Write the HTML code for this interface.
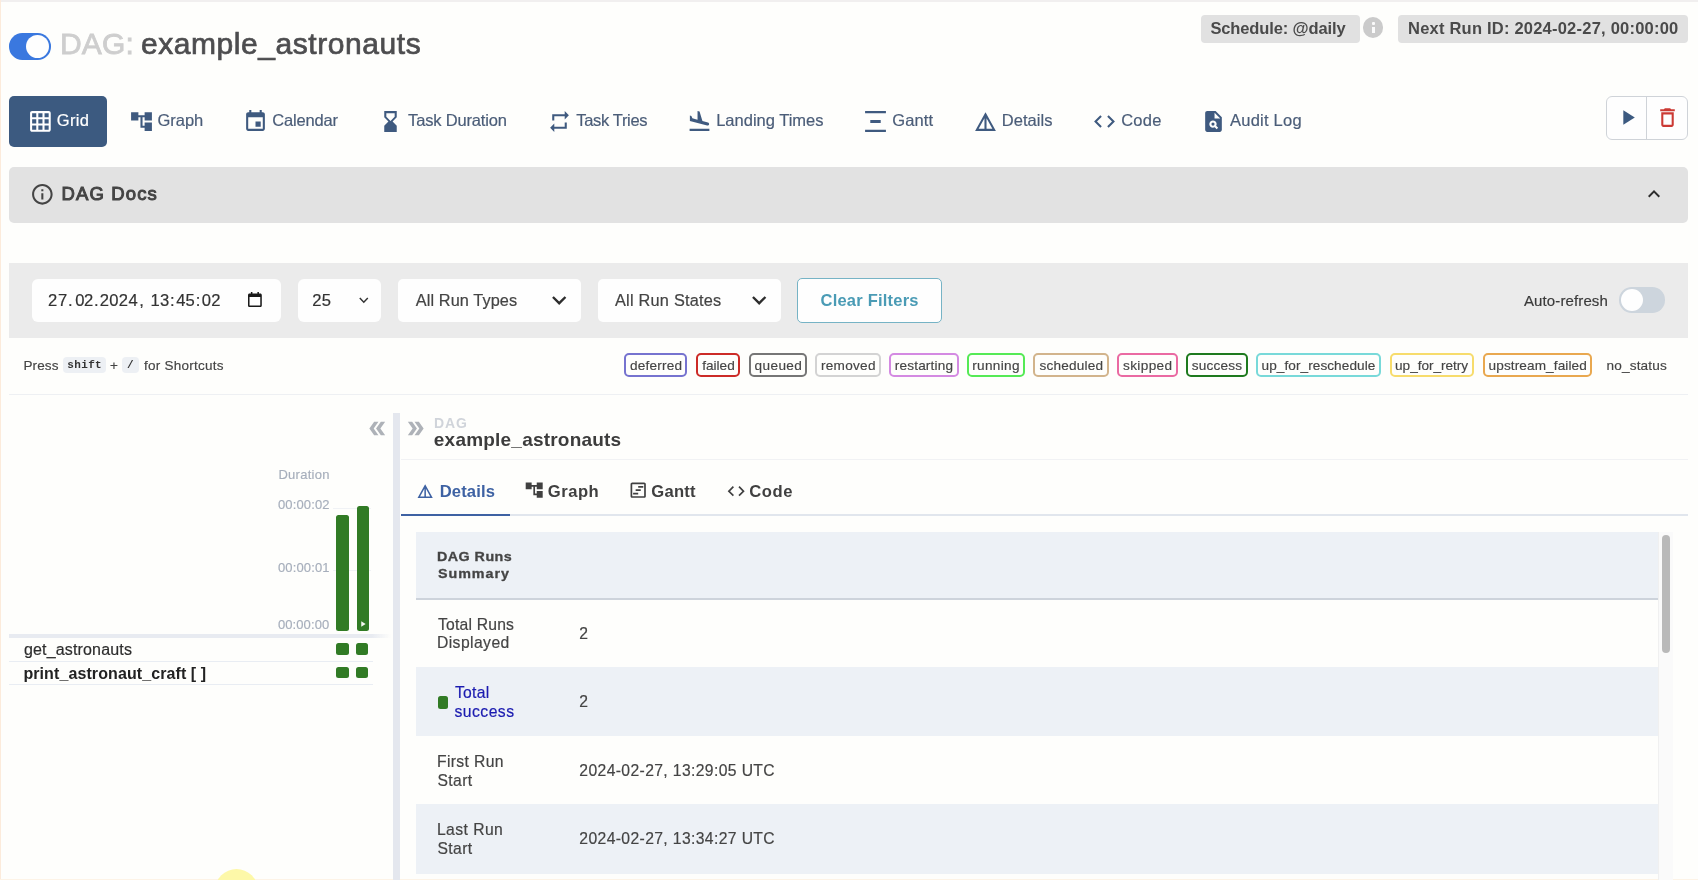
<!DOCTYPE html>
<html><head><meta charset="utf-8"><title>example_astronauts - Grid - Airflow</title>
<style>
html,body{margin:0;padding:0;}
body{width:1698px;height:880px;overflow:hidden;background:#fefefc;font-family:'Liberation Sans', sans-serif;position:relative;}
.t{position:absolute;white-space:pre;line-height:1;font-family:'Liberation Sans', sans-serif;}
#w{position:absolute;left:0;top:0;width:1698px;height:880px;will-change:transform;}
.a{position:absolute;}
svg{position:absolute;overflow:visible;}
</style></head><body><div id="w">
<!-- edges -->
<div class="a" style="left:0;top:0;width:1698px;height:2px;background:#f1efef"></div>
<div class="a" style="left:0;top:0;width:1.2px;height:880px;background:#fcebdb"></div>
<div class="a" style="left:0;top:878.5px;width:1698px;height:1.5px;background:#fdf3e6"></div>
<!-- cursor highlight -->
<div class="a" style="left:214.5px;top:869.2px;width:43.6px;height:43.6px;border-radius:50%;background:#fdf8a8"></div>

<!-- DAG toggle -->
<div class="a" style="left:9px;top:33px;width:42px;height:26.5px;border-radius:13.25px;background:#3a78df"></div>
<div class="a" style="left:26px;top:34.7px;width:23.2px;height:23.2px;border-radius:50%;background:#fefefe"></div>

<!-- schedule badges -->
<div class="a" style="left:1200.7px;top:14.6px;width:159.3px;height:28.1px;border-radius:4px;background:#e1e1e1"></div>
<div class="a" style="left:1398px;top:14.6px;width:290px;height:28.1px;border-radius:4px;background:#e1e1e1"></div>
<div class="a" style="left:1362.8px;top:17.2px;width:20.6px;height:20.6px;border-radius:50%;background:#cbcbcb"></div>
<div class="a" style="left:1371.7px;top:22px;width:3px;height:3px;background:#fbfbfb;border-radius:1px"></div>
<div class="a" style="left:1371.7px;top:26.6px;width:3px;height:6.8px;background:#fbfbfb"></div>

<!-- Grid tab -->
<div class="a" style="left:9px;top:96px;width:98px;height:50.7px;border-radius:5px;background:#3c5a80"></div>

<!-- run/delete buttons -->
<div class="a" style="left:1606px;top:96px;width:79.5px;height:41.6px;border:1px solid #cfd3d8;border-radius:6px;background:#fefefe"></div>
<div class="a" style="left:1646px;top:96px;width:1px;height:43.6px;background:#cfd3d8"></div>

<!-- DAG docs bar -->
<div class="a" style="left:9px;top:167px;width:1678.5px;height:55.5px;border-radius:5px;background:#e2e2e2"></div>

<!-- filter bar -->
<div class="a" style="left:9px;top:263px;width:1678.8px;height:74.5px;background:#ebebeb"></div>
<div class="a" style="left:32.4px;top:278.8px;width:248.2px;height:43.2px;border-radius:6px;background:#fefefe"></div>
<div class="a" style="left:298px;top:278.8px;width:83px;height:43.2px;border-radius:6px;background:#fefefe"></div>
<div class="a" style="left:397.8px;top:278.8px;width:183.7px;height:43.2px;border-radius:5px;background:#fefefe"></div>
<div class="a" style="left:597.9px;top:278.8px;width:183.4px;height:43.2px;border-radius:5px;background:#fefefe"></div>
<div class="a" style="left:797.3px;top:278px;width:142.5px;height:42.5px;border:1px solid #76b3c5;border-radius:5px;background:#fefefe"></div>
<!-- auto refresh switch -->
<div class="a" style="left:1619px;top:287.2px;width:46.4px;height:25.4px;border-radius:12.7px;background:#cdd5dd"></div>
<div class="a" style="left:1620.6px;top:288.8px;width:22.2px;height:22.2px;border-radius:50%;background:#fefefe"></div>

<!-- kbd -->
<div class="a" style="left:63px;top:357px;width:43px;height:16.4px;border-radius:4px;background:#edf0f4"></div>
<div class="a" style="left:122.3px;top:357px;width:16.7px;height:16.4px;border-radius:4px;background:#edf0f4"></div>
<!-- separator -->
<div class="a" style="left:9px;top:393.5px;width:1679px;height:1.5px;background:#eef0f3"></div>
<!-- legend -->
<div class="a" style="left:624.3px;top:353.3px;width:59.2px;height:20.2px;border:2px solid #7673cf;border-radius:5px"></div>
<div class="a" style="left:695.9px;top:353.3px;width:40.4px;height:20.2px;border:2px solid #cc2b27;border-radius:5px"></div>
<div class="a" style="left:748.7px;top:353.3px;width:54.6px;height:20.2px;border:2px solid #767676;border-radius:5px"></div>
<div class="a" style="left:815.4px;top:353.3px;width:61.5px;height:20.2px;border:2px solid #d3d3d3;border-radius:5px"></div>
<div class="a" style="left:889.3px;top:353.3px;width:65.3px;height:20.2px;border:2px solid #d48ae2;border-radius:5px"></div>
<div class="a" style="left:966.7px;top:353.3px;width:54.3px;height:20.2px;border:2px solid #55ea55;border-radius:5px"></div>
<div class="a" style="left:1033.4px;top:353.3px;width:71.2px;height:20.2px;border:2px solid #d2b48c;border-radius:5px"></div>
<div class="a" style="left:1117px;top:353.3px;width:56.5px;height:20.2px;border:2px solid #ea6aa2;border-radius:5px"></div>
<div class="a" style="left:1185.6px;top:353.3px;width:58.3px;height:20.2px;border:2px solid #1e7a1e;border-radius:5px"></div>
<div class="a" style="left:1256px;top:353.3px;width:121.0px;height:20.2px;border:2px solid #78d9d9;border-radius:5px"></div>
<div class="a" style="left:1389.5px;top:353.3px;width:80.9px;height:20.2px;border:2px solid #f7dc6c;border-radius:5px"></div>
<div class="a" style="left:1483px;top:353.3px;width:105.4px;height:20.2px;border:2px solid #e9a84f;border-radius:5px"></div>
<!-- grid panel -->
<div class="a" style="left:393.2px;top:413.2px;width:7.3px;height:467px;background:#e4e7ee"></div>
<div class="a" style="left:9px;top:634.3px;width:382px;height:3.4px;background:linear-gradient(to right,#e8ebf1 0,#e8ebf1 95%,rgba(232,235,241,0) 100%)"></div>
<div class="a" style="left:332.5px;top:507.8px;width:38px;height:1px;background:#f0f2f5"></div>
<div class="a" style="left:332.5px;top:569.9px;width:38px;height:1px;background:#f0f2f5"></div>
<div class="a" style="left:9px;top:660.7px;width:364px;height:1.2px;background:#e9edf3"></div>
<div class="a" style="left:9px;top:683.6px;width:364px;height:1.2px;background:#e9edf3"></div>
<!-- bars -->
<div class="a" style="left:336.4px;top:514.9px;width:12.6px;height:116px;border-radius:2.5px;background:#317b25"></div>
<div class="a" style="left:356.5px;top:505.7px;width:12.7px;height:125.2px;border-radius:2.5px;background:#317b25"></div>
<svg style="left:361px;top:620.8px" width="5" height="5.8" viewBox="0 0 6 7"><path d="M0.3 0.2 L5.6 3.5 L0.3 6.8 Z" fill="#f4f8f2"/></svg>
<!-- squares -->
<div class="a" style="left:336.4px;top:643.4px;width:12.2px;height:11.7px;border-radius:2.5px;background:#317b25"></div>
<div class="a" style="left:356.3px;top:643.4px;width:12.2px;height:11.7px;border-radius:2.5px;background:#317b25"></div>
<div class="a" style="left:336.4px;top:666.8px;width:12.2px;height:11.7px;border-radius:2.5px;background:#317b25"></div>
<div class="a" style="left:356.3px;top:666.8px;width:12.2px;height:11.7px;border-radius:2.5px;background:#317b25"></div>

<!-- right panel -->
<div class="a" style="left:400.5px;top:458.6px;width:1287.5px;height:1.2px;background:#f1f2f4"></div>
<div class="a" style="left:400.5px;top:514.3px;width:1287.5px;height:2px;background:#e1e6ed"></div>
<div class="a" style="left:400.5px;top:513.8px;width:109px;height:2.6px;background:#3e62a3"></div>
<!-- table -->
<div class="a" style="left:415.7px;top:531.6px;width:1242.3px;height:66.4px;background:#edf1f6"></div>
<div class="a" style="left:415.7px;top:597.8px;width:1242.3px;height:2.6px;background:#cdd3db"></div>
<div class="a" style="left:415.7px;top:667.2px;width:1242.3px;height:69.3px;background:#edf1f6"></div>
<div class="a" style="left:415.7px;top:804.4px;width:1242.3px;height:69.5px;background:#edf1f6"></div>
<div class="a" style="left:438px;top:696.3px;width:10px;height:12.3px;border-radius:2.5px;background:#317b25"></div>
<!-- scrollbar -->
<div class="a" style="left:1658px;top:532px;width:14.5px;height:348px;background:#fafafa;border-left:1px solid #f0f0f0;box-sizing:border-box"></div>
<div class="a" style="left:1661.6px;top:534.7px;width:8.4px;height:118.5px;border-radius:4.2px;background:#b9b9b9"></div>
<!-- icons -->
<svg style="left:27.9px;top:108.6px" width="24.8" height="24.8" viewBox="0 0 24 24"><path d="M20 2H4c-1.1 0-2 .9-2 2v16c0 1.1.9 2 2 2h16c1.1 0 2-.9 2-2V4c0-1.1-.9-2-2-2zM8 20H4v-4h4v4zm0-6H4v-4h4v4zm0-6H4V4h4v4zm6 12h-4v-4h4v4zm0-6h-4v-4h4v4zm0-6h-4V4h4v4zm6 12h-4v-4h4v4zm0-6h-4v-4h4v4zm0-6h-4V4h4v4z" fill="#ffffff" /></svg>
<svg style="left:128.50px;top:108.70px" width="25" height="25" viewBox="0 0 24 24"><path d="M22 11V3h-7v3H9V3H2v8h7V8h2v10h4v3h7v-8h-7v3h-2V8h2v3z" fill="#3f5a7f" /></svg>
<svg style="left:242.50px;top:108.70px" width="25" height="25" viewBox="0 0 24 24"><path d="M17 12h-5v5h5v-5zM16 1v2H8V1H6v2H5c-1.11 0-1.99.9-1.99 2L3 19c0 1.1.89 2 2 2h14c1.1 0 2-.9 2-2V5c0-1.1-.9-2-2-2h-1V1h-2zm3 18H5V8h14v11z" fill="#3f5a7f" /></svg>
<svg style="left:378.35px;top:108.70px" width="25" height="25" viewBox="0 0 24 24"><path d="M18 22l-.01-6L14 12l3.99-4.01L18 2H6v6l4 4-4 3.99V22h12zM8 7.5V4h8v3.5l-4 4-4-4z" fill="#3f5a7f" /></svg>
<svg style="left:546.75px;top:109.00px" width="25" height="25" viewBox="0 0 24 24"><path d="M7 7h10v3l4-4-4-4v3H5v6h2V7zm10 10H7v-3l-4 4 4 4v-3h12v-6h-2v4z" fill="#3f5a7f" /></svg>
<svg style="left:687.35px;top:108.70px" width="25" height="25" viewBox="0 0 24 24"><path d="M2.5 19h19v2h-19v-2zm16.84-3.15c.8.21 1.62-.26 1.84-1.06.21-.8-.26-1.62-1.06-1.84l-5.31-1.42-2.76-9.02L10.12 2v8.28L5.15 8.95l-.93-2.32-1.45-.39v5.17l16.57 4.44z" fill="#3f5a7f" /></svg>
<svg style="left:863.15px;top:108.70px" width="25" height="25" viewBox="0 0 24 24"><path d="M22 2v2H2V2h20zM7 10.5v3h10v-3H7zM2 20v2h20v-2H2z" fill="#3f5a7f" /></svg>
<svg style="left:972.95px;top:108.70px" width="25" height="25" viewBox="0 0 24 24"><path d="M12 3L2 21h20L12 3zm1 5.92L18.6 19H13V8.92zm-2 0V19H5.4L11 8.92z" fill="#3f5a7f" /></svg>
<svg style="left:1092.00px;top:108.50px" width="25" height="25" viewBox="0 0 24 24"><path d="M9.4 16.6L4.8 12l4.6-4.6L8 6l-6 6 6 6 1.4-1.4zm5.2 0l4.6-4.6-4.6-4.6L16 6l6 6-6 6-1.4-1.4z" fill="#3f5a7f" /></svg>
<svg style="left:1201.10px;top:108.90px" width="25" height="25" viewBox="0 0 24 24"><path d="M14 2H6c-1.1 0-2 .9-2 2v16c0 1.1.89 2 1.99 2H18c1.1 0 2-.9 2-2V8l-6-6zm1.04 17.45l-1.88-1.88c-1.33.71-3.01.53-4.13-.59-1.37-1.37-1.37-3.58 0-4.95 1.37-1.37 3.58-1.37 4.95 0 1.12 1.12 1.31 2.8.59 4.13l1.88 1.88-1.41 1.41zM13 9V3.5L18.5 9H13z M11.5 13a1.5 1.5 0 1 0 0 3 1.5 1.5 0 1 0 0-3z" fill="#3f5a7f" /></svg>
<svg style="left:1614.6px;top:105.3px" width="25" height="25" viewBox="0 0 24 24"><path d="M8 5v14l11-7z" fill="#3c5a80" /></svg>
<svg style="left:1654.7px;top:104.9px" width="25" height="25" viewBox="0 0 24 24"><path d="M6 19c0 1.1.9 2 2 2h8c1.1 0 2-.9 2-2V7H6v12zM8 9h8v10H8V9zm7.5-5l-1-1h-5l-1 1H5v2h14V4h-3.5z" fill="#cb3a34" /></svg>
<svg style="left:30.3px;top:181.5px" width="24.7" height="24.7" viewBox="0 0 24 24"><path d="M11 7h2v2h-2zm0 4h2v6h-2zm1-9C6.48 2 2 6.48 2 12s4.48 10 10 10 10-4.48 10-10S17.52 2 12 2zm0 18c-4.41 0-8-3.59-8-8s3.59-8 8-8 8 3.59 8 8-3.59 8-8 8z" fill="#444444" /></svg>
<svg style="left:1642px;top:181.5px" width="24" height="24" viewBox="0 0 24 24"><path d="M7.41 15.41L12 10.83l4.59 4.58L18 14l-6-6-6 6z" fill="#2d2d2d" /></svg>
<svg style="left:544.7px;top:285.8px" width="28.4" height="28.4" viewBox="0 0 24 24"><path d="M16.59 8.59L12 13.17 7.41 8.59 6 10l6 6 6-6z" fill="#2d2d2d" /></svg>
<svg style="left:745.2px;top:285.8px" width="28.4" height="28.4" viewBox="0 0 24 24"><path d="M16.59 8.59L12 13.17 7.41 8.59 6 10l6 6 6-6z" fill="#2d2d2d" /></svg>
<svg style="left:358.6px;top:297.4px" width="9.6" height="6.6" viewBox="0 0 9.6 6.6"><path d="M0.8 1 L4.8 5.2 L8.8 1" fill="none" stroke="#333" stroke-width="1.5"/></svg>
<svg style="left:247.7px;top:292.2px" width="13.8" height="15" viewBox="0 0 14.4 15.2" preserveAspectRatio="none"><path d="M3 0h1.6v1.6h5.2V0h1.6v1.6h1.4c.9 0 1.6.7 1.6 1.6v10.4c0 .9-.7 1.6-1.6 1.6H1.6C.7 15.2 0 14.5 0 13.600V3.2c0-.9.7-1.6 1.6-1.6H3V0zM1.6 5v8.600h11.200V5H1.600z" fill="#1a1a1a" fill-rule="evenodd"/></svg>
<svg style="left:366.4px;top:417.1px" width="23" height="23" viewBox="0 0 24 24"><path transform="translate(24,0) scale(-1,1)" d="M15.5 5H11l5 7-5 7h4.5l5-7z M8.5 5H4l5 7-5 7h4.5l5-7z" fill="#aeb2b8"/></svg>
<svg style="left:404.1px;top:417.1px" width="23" height="23" viewBox="0 0 24 24"><path d="M15.5 5H11l5 7-5 7h4.5l5-7z M8.5 5H4l5 7-5 7h4.5l5-7z" fill="#aeb2b8"/></svg>
<svg style="left:416.3px;top:481.8px" width="18.3" height="18.3" viewBox="0 0 24 24"><path d="M12 3L2 21h20L12 3zm1 5.92L18.6 19H13V8.92zm-2 0V19H5.4L11 8.92z" fill="#3e62a3" /></svg>
<svg style="left:524.35px;top:480.3px" width="20.4" height="20.4" viewBox="0 0 24 24"><path d="M22 11V3h-7v3H9V3H2v8h7V8h2v10h4v3h7v-8h-7v3h-2V8h2v3z" fill="#404040" /></svg>
<svg style="left:627.8px;top:480.4px" width="20.4" height="20.4" viewBox="0 0 24 24"><path d="M6 15h6v2H6zm6-8h6v2h-6zm-3 4h6v2H9z M19 3H5c-1.1 0-2 .9-2 2v14c0 1.1.9 2 2 2h14c1.1 0 2-.9 2-2V5c0-1.1-.9-2-2-2zm0 16H5V5h14v14z" fill="#404040" /></svg>
<svg style="left:725.75px;top:480.8px" width="20.4" height="20.4" viewBox="0 0 24 24"><path d="M9.4 16.6L4.8 12l4.6-4.6L8 6l-6 6 6 6 1.4-1.4zm5.2 0l4.6-4.6-4.6-4.6L16 6l6 6-6 6-1.4-1.4z" fill="#404040" /></svg>

<span class="t" style="left:59.90px;top:29px;font-size:30px;color:#cecece;letter-spacing:0.200px;-webkit-text-stroke:0.8px;">DAG:</span>
<span class="t" style="left:140.90px;top:29px;font-size:30px;color:#4d4d4f;letter-spacing:0.565px;-webkit-text-stroke:0.7px;">example_astronauts</span>
<span class="t" style="left:1210.40px;top:20px;font-size:16.5px;font-weight:bold;color:#4a4a4a;letter-spacing:-0.127px;">Schedule: @daily</span>
<span class="t" style="left:1408.00px;top:20px;font-size:16.5px;font-weight:bold;color:#4a4a4a;letter-spacing:0.219px;">Next Run ID: 2024-02-27, 00:00:00</span>
<span class="t" style="left:56.75px;top:112px;font-size:16.5px;color:#ffffff;letter-spacing:0.367px;-webkit-text-stroke:0.2px;">Grid</span>
<span class="t" style="left:157.55px;top:112px;font-size:16.5px;color:#4b5d78;letter-spacing:-0.038px;-webkit-text-stroke:0.2px;">Graph</span>
<span class="t" style="left:272.25px;top:112px;font-size:16.5px;color:#4b5d78;letter-spacing:-0.171px;-webkit-text-stroke:0.2px;">Calendar</span>
<span class="t" style="left:408.05px;top:112px;font-size:16.5px;color:#4b5d78;letter-spacing:-0.171px;-webkit-text-stroke:0.2px;">Task Duration</span>
<span class="t" style="left:576.25px;top:112px;font-size:16.5px;color:#4b5d78;letter-spacing:-0.333px;-webkit-text-stroke:0.2px;">Task Tries</span>
<span class="t" style="left:716.15px;top:112px;font-size:16.5px;color:#4b5d78;letter-spacing:0.008px;-webkit-text-stroke:0.2px;">Landing Times</span>
<span class="t" style="left:892.25px;top:112px;font-size:16.5px;color:#4b5d78;letter-spacing:0.125px;-webkit-text-stroke:0.2px;">Gantt</span>
<span class="t" style="left:1001.75px;top:112px;font-size:16.5px;color:#4b5d78;letter-spacing:0.042px;-webkit-text-stroke:0.2px;">Details</span>
<span class="t" style="left:1121.15px;top:112px;font-size:16.5px;color:#4b5d78;letter-spacing:0.267px;-webkit-text-stroke:0.2px;">Code</span>
<span class="t" style="left:1230.00px;top:112px;font-size:16.5px;color:#4b5d78;letter-spacing:0.231px;-webkit-text-stroke:0.2px;">Audit Log</span>
<span class="t" style="left:61.40px;top:185px;font-size:18.5px;color:#444444;letter-spacing:1.150px;-webkit-text-stroke:1.0px;">DAG Docs</span>
<span class="t" style="left:48.05px;top:293px;font-size:16.6px;color:#333;letter-spacing:0.700px;-webkit-text-stroke:0.2px;">27</span>
<span class="t" style="left:68.00px;top:293px;font-size:16.6px;color:#333;letter-spacing:0.000px;-webkit-text-stroke:0.2px;">.</span>
<span class="t" style="left:75.20px;top:293px;font-size:16.6px;color:#333;letter-spacing:-0.300px;-webkit-text-stroke:0.2px;">02</span>
<span class="t" style="left:94.00px;top:293px;font-size:16.6px;color:#333;letter-spacing:0.000px;-webkit-text-stroke:0.2px;">.</span>
<span class="t" style="left:99.65px;top:293px;font-size:16.6px;color:#333;letter-spacing:0.350px;-webkit-text-stroke:0.2px;">2024</span>
<span class="t" style="left:139.20px;top:293px;font-size:16.6px;color:#333;letter-spacing:0.000px;-webkit-text-stroke:0.2px;">,</span>
<span class="t" style="left:150.45px;top:293px;font-size:16.6px;color:#333;letter-spacing:0.400px;-webkit-text-stroke:0.2px;">13</span>
<span class="t" style="left:169.90px;top:293px;font-size:16.6px;color:#333;letter-spacing:0.000px;-webkit-text-stroke:0.2px;">:</span>
<span class="t" style="left:176.15px;top:293px;font-size:16.6px;color:#333;letter-spacing:0.250px;-webkit-text-stroke:0.2px;">45</span>
<span class="t" style="left:195.70px;top:293px;font-size:16.6px;color:#333;letter-spacing:0.000px;-webkit-text-stroke:0.2px;">:</span>
<span class="t" style="left:201.70px;top:293px;font-size:16.6px;color:#333;letter-spacing:0.450px;-webkit-text-stroke:0.2px;">02</span>
<span class="t" style="left:312.15px;top:293px;font-size:16.6px;color:#333;letter-spacing:0.450px;-webkit-text-stroke:0.2px;">25</span>
<span class="t" style="left:415.80px;top:292px;font-size:16.3px;color:#444444;letter-spacing:0.096px;-webkit-text-stroke:0.2px;">All Run Types</span>
<span class="t" style="left:615.00px;top:292px;font-size:16.3px;color:#444444;letter-spacing:0.235px;-webkit-text-stroke:0.2px;">All Run States</span>
<span class="t" style="left:820.55px;top:292px;font-size:16.5px;font-weight:bold;color:#4a9bb5;letter-spacing:0.217px;">Clear Filters</span>
<span class="t" style="left:1524.00px;top:293px;font-size:15px;color:#3a3a3a;letter-spacing:0.114px;-webkit-text-stroke:0.18px;">Auto-refresh</span>
<span class="t" style="left:23.40px;top:359px;font-size:13.5px;color:#444;letter-spacing:0.150px;-webkit-text-stroke:0.16px;">Press</span>
<span class="t" style="left:67.25px;top:360px;font-size:11px;font-weight:bold;color:#333;letter-spacing:0.363px;font-family:'Liberation Mono', monospace;">shift</span>
<span class="t" style="left:109.90px;top:359px;font-size:13.5px;color:#444;letter-spacing:0.350px;-webkit-text-stroke:0.16px;">+</span>
<span class="t" style="left:126.90px;top:360px;font-size:11px;font-weight:bold;color:#333;letter-spacing:0.000px;font-family:'Liberation Mono', monospace;">/</span>
<span class="t" style="left:144.00px;top:359px;font-size:13.5px;color:#444;letter-spacing:0.250px;-webkit-text-stroke:0.16px;">for Shortcuts</span>
<span class="t" style="left:630.10px;top:359px;font-size:13.6px;color:#444;letter-spacing:0.193px;-webkit-text-stroke:0.16px;">deferred</span>
<span class="t" style="left:702.20px;top:359px;font-size:13.6px;color:#444;letter-spacing:0.010px;-webkit-text-stroke:0.16px;">failed</span>
<span class="t" style="left:754.50px;top:359px;font-size:13.6px;color:#444;letter-spacing:0.400px;-webkit-text-stroke:0.16px;">queued</span>
<span class="t" style="left:820.95px;top:359px;font-size:13.6px;color:#444;letter-spacing:0.275px;-webkit-text-stroke:0.16px;">removed</span>
<span class="t" style="left:894.85px;top:359px;font-size:13.6px;color:#444;letter-spacing:0.161px;-webkit-text-stroke:0.16px;">restarting</span>
<span class="t" style="left:972.25px;top:359px;font-size:13.6px;color:#444;letter-spacing:0.325px;-webkit-text-stroke:0.16px;">running</span>
<span class="t" style="left:1039.45px;top:359px;font-size:13.6px;color:#444;letter-spacing:0.200px;-webkit-text-stroke:0.16px;">scheduled</span>
<span class="t" style="left:1123.05px;top:359px;font-size:13.6px;color:#444;letter-spacing:0.358px;-webkit-text-stroke:0.16px;">skipped</span>
<span class="t" style="left:1191.65px;top:359px;font-size:13.6px;color:#444;letter-spacing:0.200px;-webkit-text-stroke:0.16px;">success</span>
<span class="t" style="left:1261.55px;top:359px;font-size:13.6px;color:#444;letter-spacing:0.072px;-webkit-text-stroke:0.16px;">up_for_reschedule</span>
<span class="t" style="left:1395.05px;top:359px;font-size:13.6px;color:#444;letter-spacing:-0.018px;-webkit-text-stroke:0.16px;">up_for_retry</span>
<span class="t" style="left:1488.55px;top:359px;font-size:13.6px;color:#444;letter-spacing:0.111px;-webkit-text-stroke:0.16px;">upstream_failed</span>
<span class="t" style="left:1606.45px;top:359px;font-size:13.6px;color:#444;letter-spacing:0.181px;-webkit-text-stroke:0.16px;">no_status</span>
<span class="t" style="left:278.40px;top:468px;font-size:13px;color:#a6aebb;letter-spacing:0.286px;-webkit-text-stroke:0.16px;">Duration</span>
<span class="t" style="left:277.90px;top:498px;font-size:13px;color:#a6aebb;letter-spacing:0.143px;-webkit-text-stroke:0.16px;">00:00:02</span>
<span class="t" style="left:277.90px;top:561px;font-size:13px;color:#a6aebb;letter-spacing:0.143px;-webkit-text-stroke:0.16px;">00:00:01</span>
<span class="t" style="left:277.90px;top:618px;font-size:13px;color:#a6aebb;letter-spacing:0.107px;-webkit-text-stroke:0.16px;">00:00:00</span>
<span class="t" style="left:23.90px;top:642px;font-size:16px;color:#2d2d2d;letter-spacing:0.169px;-webkit-text-stroke:0.19px;">get_astronauts</span>
<span class="t" style="left:23.40px;top:666px;font-size:16px;font-weight:bold;color:#222;letter-spacing:0.096px;">print_astronaut_craft [ ]</span>
<span class="t" style="left:433.90px;top:416px;font-size:14px;font-weight:bold;color:#d0d4da;letter-spacing:0.925px;">DAG</span>
<span class="t" style="left:433.85px;top:430px;font-size:19px;font-weight:bold;color:#3c3c3c;letter-spacing:0.209px;">example_astronauts</span>
<span class="t" style="left:439.70px;top:484px;font-size:16.6px;font-weight:bold;color:#3e62a3;letter-spacing:0.142px;">Details</span>
<span class="t" style="left:547.85px;top:484px;font-size:16.6px;font-weight:bold;color:#404040;letter-spacing:0.500px;">Graph</span>
<span class="t" style="left:651.25px;top:484px;font-size:16.6px;font-weight:bold;color:#404040;letter-spacing:0.250px;">Gantt</span>
<span class="t" style="left:749.25px;top:484px;font-size:16.6px;font-weight:bold;color:#404040;letter-spacing:0.583px;">Code</span>
<span class="t" style="left:437.38px;top:550px;font-size:13px;font-weight:bold;color:#444;letter-spacing:0.425px;-webkit-text-stroke:0.3px;transform:scaleX(1.1);transform-origin:0 0;">DAG Runs</span>
<span class="t" style="left:437.93px;top:567px;font-size:13px;font-weight:bold;color:#444;letter-spacing:0.864px;-webkit-text-stroke:0.3px;transform:scaleX(1.1);transform-origin:0 0;">Summary</span>
<span class="t" style="left:437.95px;top:617px;font-size:15.7px;color:#444;letter-spacing:0.211px;-webkit-text-stroke:0.19px;">Total Runs</span>
<span class="t" style="left:436.95px;top:635px;font-size:15.7px;color:#444;letter-spacing:0.431px;-webkit-text-stroke:0.19px;">Displayed</span>
<span class="t" style="left:579.35px;top:626px;font-size:15.7px;color:#444;letter-spacing:0.950px;-webkit-text-stroke:0.19px;">2</span>
<span class="t" style="left:454.95px;top:685px;font-size:15.7px;color:#1b1bb0;letter-spacing:0.300px;-webkit-text-stroke:0.19px;">Total</span>
<span class="t" style="left:454.45px;top:704px;font-size:15.7px;color:#1b1bb0;letter-spacing:0.483px;-webkit-text-stroke:0.19px;">success</span>
<span class="t" style="left:579.35px;top:694px;font-size:15.7px;color:#444;letter-spacing:0.950px;-webkit-text-stroke:0.19px;">2</span>
<span class="t" style="left:436.95px;top:754px;font-size:15.7px;color:#444;letter-spacing:0.375px;-webkit-text-stroke:0.19px;">First Run</span>
<span class="t" style="left:437.45px;top:773px;font-size:15.7px;color:#444;letter-spacing:0.388px;-webkit-text-stroke:0.19px;">Start</span>
<span class="t" style="left:579.35px;top:763px;font-size:15.7px;color:#444;letter-spacing:0.376px;-webkit-text-stroke:0.19px;">2024-02-27, 13:29:05 UTC</span>
<span class="t" style="left:436.95px;top:822px;font-size:15.7px;color:#444;letter-spacing:0.436px;-webkit-text-stroke:0.19px;">Last Run</span>
<span class="t" style="left:437.45px;top:841px;font-size:15.7px;color:#444;letter-spacing:0.388px;-webkit-text-stroke:0.19px;">Start</span>
<span class="t" style="left:579.35px;top:831px;font-size:15.7px;color:#444;letter-spacing:0.376px;-webkit-text-stroke:0.19px;">2024-02-27, 13:34:27 UTC</span>
</div></body></html>
